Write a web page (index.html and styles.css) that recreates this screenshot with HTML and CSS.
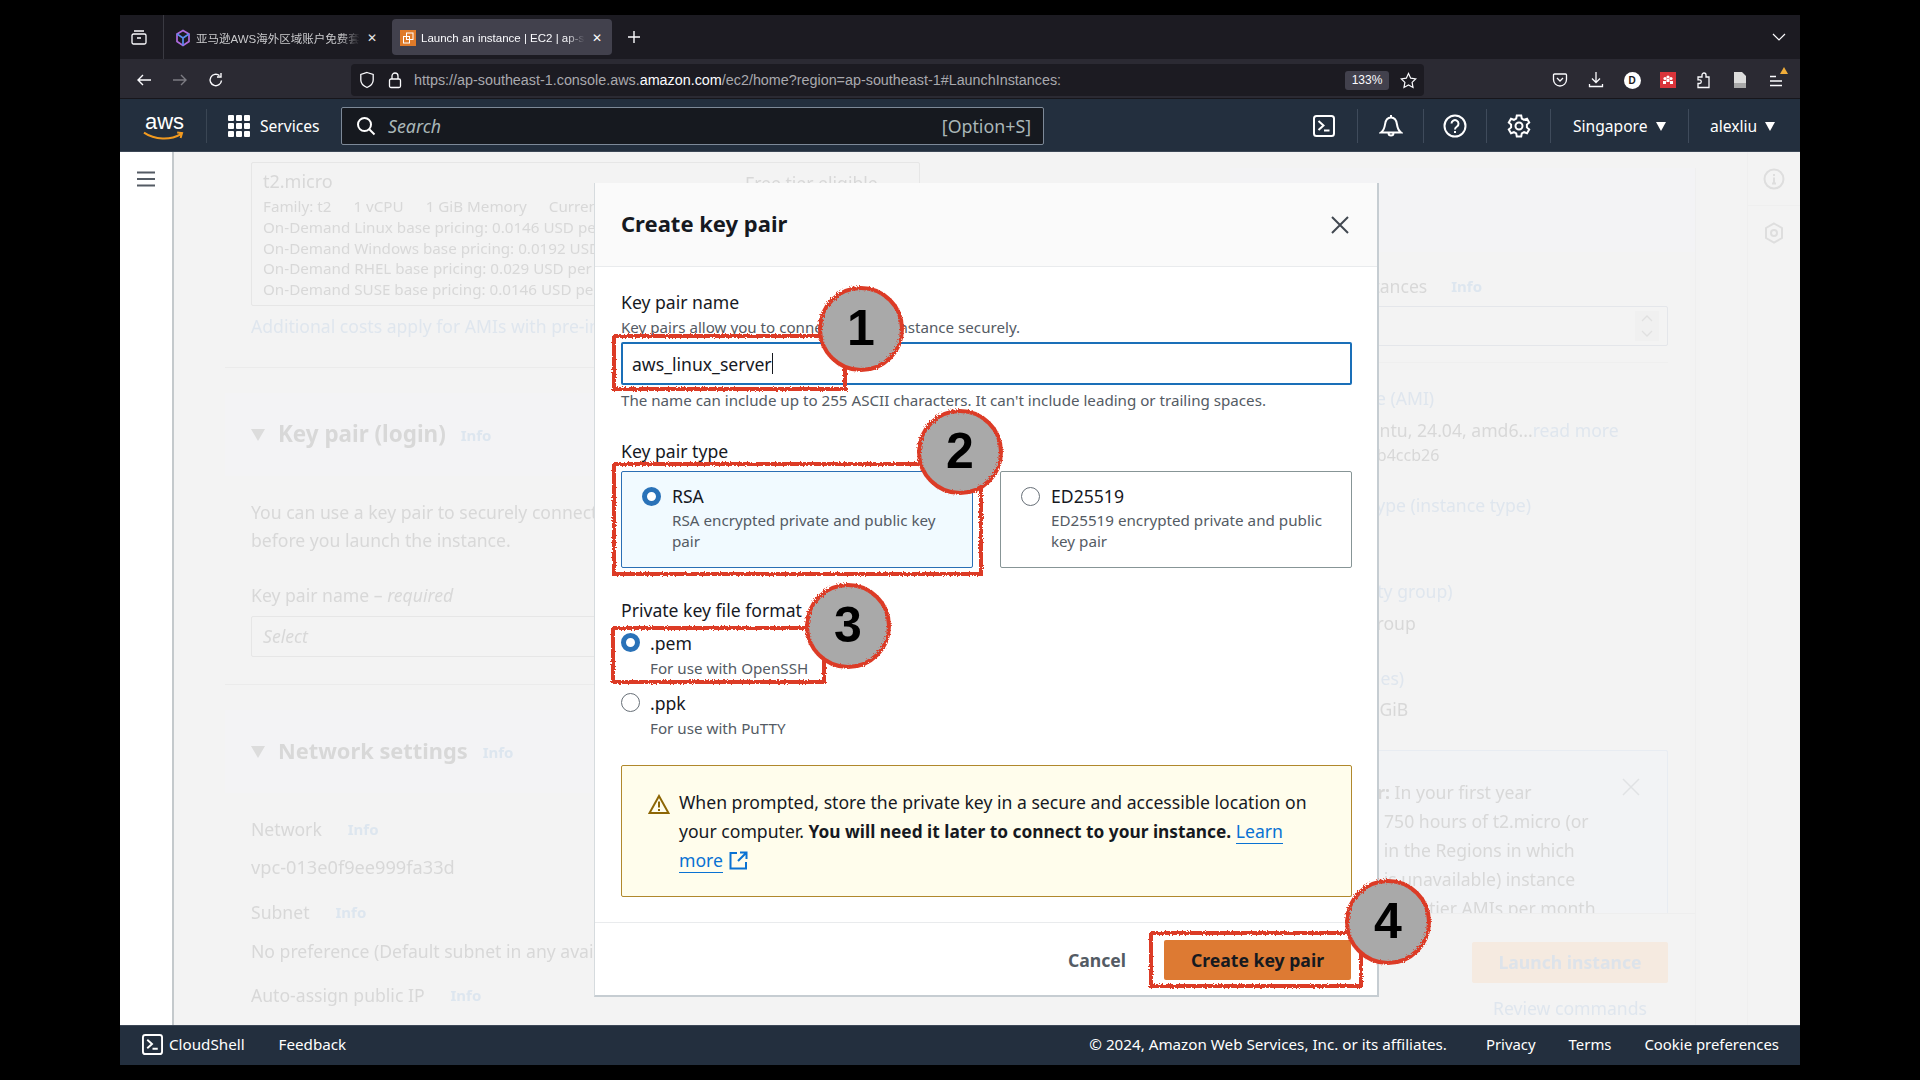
FILE: index.html
```html
<!DOCTYPE html>
<html lang="en">
<head>
<meta charset="utf-8">
<title>Launch an instance | EC2</title>
<link rel="stylesheet" href="styles.css">
</head>
<body>
<svg class="defs" width="0" height="0" aria-hidden="true"><defs><filter id="rough" x="-5%" y="-5%" width="110%" height="110%"><feTurbulence type="fractalNoise" baseFrequency="0.6" numOctaves="2" seed="4"/><feDisplacementMap in="SourceGraphic" scale="3.5"/></filter></defs></svg>
<div class="window">
  <div class="tabs">
    <div class="tabview"><svg width="16" height="16" viewBox="0 0 16 16" fill="none" stroke="#fbfbfe" stroke-width="1.3"><rect x="1" y="5" width="14" height="10" rx="1.5"/><path d="M3 2h10M6 9h4"/></svg></div>
    <div class="tab tab-first">
      <svg width="16" height="18" viewBox="0 0 16 18" fill="none" stroke-width="1.7"><path d="M8 1.5l6 3.5v7.5l-6 4-6-4V5z" stroke="#b06be0"/><path d="M2 5l6 4 6-4M8 9v7.5" stroke="#5a8df0"/></svg>
      <span class="tab-title tab-cjk">亚马逊AWS海外区域账户免费套餐</span>
      <span class="tab-x">✕</span>
    </div>
    <div class="tab tab-on">
      <svg width="16" height="16" viewBox="0 0 16 16"><rect width="16" height="16" fill="#e07b29"/><g fill="none" stroke="#fff" stroke-width="1"><rect x="6.5" y="3" width="6.5" height="6.5"/><rect x="3.5" y="6.5" width="6" height="6.5"/></g></svg>
      <span class="tab-title">Launch an instance | EC2 | ap-southeast-1</span>
      <span class="tab-x">✕</span>
    </div>
    <svg class="plus" width="14" height="14" viewBox="0 0 14 14" stroke="#fbfbfe" stroke-width="1.4"><path d="M7 1v12M1 7h12"/></svg>
    <svg class="chev" width="14" height="8" viewBox="0 0 14 8" fill="none" stroke="#fbfbfe" stroke-width="1.2"><path d="M1 1l6 6 6-6"/></svg>
  </div>

  <div class="toolbar">
    <div class="tool"><svg width="16" height="16" viewBox="0 0 16 16" fill="none" stroke="#fbfbfe" stroke-width="1.4"><path d="M15 8H2M7 3L2 8l5 5"/></svg></div>
    <div class="tool"><svg width="16" height="16" viewBox="0 0 16 16" fill="none" stroke="#7c7b83" stroke-width="1.4"><path d="M1 8h13M9 3l5 5-5 5"/></svg></div>
    <div class="tool"><svg width="16" height="16" viewBox="0 0 16 16" fill="none" stroke="#fbfbfe" stroke-width="1.4"><path d="M13.5 8.5A5.7 5.7 0 1 1 11.5 3.6M13 1v4h-4"/></svg></div>
    <div class="urlbar">
      <svg width="16" height="18" viewBox="0 0 16 18" fill="none" stroke="#fbfbfe" stroke-width="1.3"><path d="M8 1.5l6.2 2v5.5c0 3.6-2.8 6-6.2 7.5-3.4-1.5-6.2-3.9-6.2-7.5V3.5z"/></svg>
      <svg class="lock" width="14" height="18" viewBox="0 0 14 18" fill="none" stroke="#fbfbfe" stroke-width="1.3"><rect x="1.5" y="8" width="11" height="8.5" rx="1.5"/><path d="M4 8V5a3 3 0 0 1 6 0v3"/></svg>
      <span class="url">https://ap-southeast-1.console.aws.<b>amazon.com</b>/ec2/home?region=ap-southeast-1#LaunchInstances:</span>
      <span class="zoombadge">133%</span>
      <svg class="star" width="17" height="17" viewBox="0 0 17 17" fill="none" stroke="#fbfbfe" stroke-width="1.2"><path d="M8.5 1.5l2.2 4.7 5 .7-3.6 3.5.9 5-4.5-2.5-4.5 2.5.9-5L1.3 6.9l5-.7z"/></svg>
    </div>
    <div class="tools-right">
      <div class="tool"><svg width="16" height="16" viewBox="0 0 16 16" fill="none" stroke="#fbfbfe" stroke-width="1.3"><path d="M2.5 2h11a1 1 0 0 1 1 1v4.500a6.500 6.500 0 0 1-13 0V3a1 1 0 0 1 1-1z"/><path d="M5 6l3 3 3-3"/></svg></div>
      <div class="tool"><svg width="16" height="18" viewBox="0 0 16 18" fill="none" stroke="#fbfbfe" stroke-width="1.3"><path d="M8 1v10M4 7.500L8 11.500l4-4M1.500 13v2.500h13V13"/></svg></div>
      <div class="tool"><span class="ext-d">D</span></div>
      <div class="tool"><svg width="16" height="16" viewBox="0 0 16 16"><rect width="16" height="16" fill="#d9343a"/><g fill="#fff"><circle cx="5" cy="6.500" r="1.600"/><circle cx="11" cy="6.500" r="1.600"/><circle cx="8" cy="5" r="1.600"/><path d="M3 12V9h3v3zM6.500 10V7h3v3zM10 12V9h3v3z"/></g></svg></div>
      <div class="tool"><svg width="16" height="18" viewBox="0 0 16 18" fill="none" stroke="#fbfbfe" stroke-width="1.3"><path d="M2 16.500v-4h1.500a1.800 1.800 0 0 0 0-3.600H2V6h4V4a2 2 0 0 1 4 0v2h3v10.500z"/></svg></div>
      <div class="tool"><svg width="14" height="18" viewBox="0 0 14 18"><path d="M1 1h8l4 4v12H1z" fill="#dcdcdc"/><path d="M1 12h12v5H1z" fill="#a8a8a8"/></svg></div>
      <div class="tool tool-menu"><svg width="16" height="14" viewBox="0 0 16 14" stroke="#fbfbfe" stroke-width="1.300"><path d="M2 3.500h6M2 8h12M2 12.500h12"/></svg><i class="menu-alert"></i></div>
    </div>
  </div>

  <header class="awsbar">
    <div class="awslogo"><span class="awsword">aws</span><svg width="41" height="10" viewBox="0 0 42 10" fill="none"><path d="M1 1.500c11 7.500 27 8 38 1.500M35 1.500l5 .5-1.500 5" stroke="#f29a1f" stroke-width="2"/></svg></div>
    <div class="services"><svg width="22" height="22" viewBox="0 0 22 22" fill="#fff"><rect width="6" height="6" rx="1"/><rect x="8" width="6" height="6" rx="1"/><rect x="16" width="6" height="6" rx="1"/><rect y="8" width="6" height="6" rx="1"/><rect x="8" y="8" width="6" height="6" rx="1"/><rect x="16" y="8" width="6" height="6" rx="1"/><rect y="16" width="6" height="6" rx="1"/><rect x="8" y="16" width="6" height="6" rx="1"/><rect x="16" y="16" width="6" height="6" rx="1"/></svg><span>Services</span></div>
    <div class="search"><svg width="20" height="20" viewBox="0 0 20 20" fill="none" stroke="#fff" stroke-width="2"><circle cx="8.500" cy="8.500" r="6.500"/><path d="M13.500 13.500l5 5"/></svg><em>Search</em><span>[Option+S]</span></div>
    <div class="awsright">
      <div class="cell c1"><svg class="term" width="22" height="22" viewBox="0 0 22 22" fill="none" stroke="#fff" stroke-width="2"><rect x="1" y="1" width="20" height="20" rx="2.500"/><path d="M5.500 6l5 4.500-5 4.500M11 15.500h5.500"/></svg></div>
      <div class="cell c2"><svg width="24" height="24" viewBox="0 0 24 24" fill="none" stroke="#fff" stroke-width="2"><path d="M2 18.500h20c-2.500-2-3.500-4.500-4-8C17.500 6.500 15.500 3.500 12 3.500S6.500 6.500 6 10.500c-.5 3.500-1.500 6-4 8zM9.500 19a2.500 2.500 0 0 0 5 0M12 1v2.500"/></svg></div>
      <div class="cell c3"><svg width="24" height="24" viewBox="0 0 24 24" fill="none" stroke="#fff" stroke-width="2"><circle cx="12" cy="12" r="10.500"/><path d="M8.500 9.500a3.500 3.500 0 1 1 5.500 3c-1.500 1-2 1.500-2 3"/><path d="M12 17v2"/></svg></div>
      <div class="cell c4"><svg width="24" height="24" viewBox="0 0 24 24" fill="none" stroke="#fff" stroke-width="2"><circle cx="12" cy="12" r="3.500"/><path d="M9.800 1.500h4.400l.6 3 2.300 1.300 2.900-1 2.200 3.800-2.300 2v2.800l2.300 2-2.200 3.800-2.900-1-2.300 1.300-.6 3H9.800l-.6-3-2.300-1.300-2.900 1-2.200-3.800 2.300-2v-2.800l-2.300-2 2.200-3.800 2.900 1 2.300-1.300z"/></svg></div>
      <div class="cell c5"><span>Singapore</span><i class="caret"></i></div>
      <div class="cell c6"><span>alexliu</span><i class="caret"></i></div>
    </div>
  </header>

  <div class="page">
    <aside class="sidenav"><svg width="18" height="16" viewBox="0 0 18 16" stroke="#545b64" stroke-width="2"><path d="M0 1.500h18M0 8h18M0 14.500h18"/></svg></aside>
    <main class="dimmed">
      <div class="col-left">
        <section class="sec1">
          <div class="typecard">
            <div class="tname">t2.micro</div>
            <div class="tline"><span>Family: t2</span><span>1 vCPU</span><span>1 GiB Memory</span><span>Current generation: true</span></div>
            <div class="tline">On-Demand Linux base pricing: 0.0146 USD per Hour</div>
            <div class="tline">On-Demand Windows base pricing: 0.0192 USD per Hour</div>
            <div class="tline">On-Demand RHEL base pricing: 0.029 USD per Hour</div>
            <div class="tline">On-Demand SUSE base pricing: 0.0146 USD per Hour</div>
            <div class="freetag">Free tier eligible</div>
          </div>
          <div class="addl">Additional costs apply for AMIs with pre-installed software</div>
        </section>
        <section class="sec">
          <div class="sechead"><i class="tri"></i><h2>Key pair (login)</h2><span class="info">Info</span></div>
          <div class="secbody">
            <p class="txt">You can use a key pair to securely connect to your instance. Ensure that you have access to the selected key pair<br>before you launch the instance.</p>
            <div class="kplabel">Key pair name – <em>required</em></div>
            <div class="sel"><em>Select</em></div>
          </div>
        </section>
        <section class="sec sec-last">
          <div class="sechead"><i class="tri"></i><h2>Network settings</h2><span class="info">Info</span></div>
          <div class="secbody">
            <div class="fl fl1"><span>Network</span><span class="info">Info</span></div>
            <div class="fv fv-vpc">vpc-013e0f9ee999fa33d</div>
            <div class="fl fl2"><span>Subnet</span><span class="info">Info</span></div>
            <div class="fv">No preference (Default subnet in any availability zone)</div>
            <div class="fl fl3"><span>Auto-assign public IP</span><span class="info">Info</span></div>
          </div>
        </section>
      </div>
      <div class="col-right">
        <div class="sumhead"><h2>Summary</h2></div>
        <div class="sumbody">
          <div class="fl sum-n"><span>Number of instances</span><span class="info">Info</span></div>
          <div class="numinput"><span class="spin"><svg width="14" height="26" viewBox="0 0 14 26" fill="none" stroke="#e0e0e0" stroke-width="1.300"><path d="M2 8l5-5 5 5M2 18l5 5 5-5"/></svg></span></div>
          <div class="sumrule"></div>
          <div class="lnk s-ami">Software Image (AMI)</div>
          <div class="s-val">Canonical, Ubuntu, 24.04, amd6...<span class="lnktxt">read more</span></div>
          <div class="s-small">ami-003c463c87b4ccb26</div>
          <div class="lnk s-type">Virtual server type (instance type)</div>
          <div class="lnk s-fw">Firewall (security group)</div>
          <div class="s-val s-val2">New security group</div>
          <div class="lnk s-st">Storage (volumes)</div>
          <div class="s-val s-val3">1 volume(s) - 8 GiB</div>
          <div class="freebox">
            <svg class="freex" width="18" height="18" viewBox="0 0 18 18" fill="none" stroke="#e0e2e4" stroke-width="1.500"><path d="M1 1l16 16M17 1L1 17"/></svg>
            <p><b>Free tier:</b> In your first year<br>includes 750 hours of t2.micro (or<br>t3.micro in the Regions in which<br>t2.micro is unavailable) instance<br>usage on free tier AMIs per month</p>
          </div>
        </div>
        <div class="sumfoot">
          <div class="launch">Launch instance</div>
          <div class="review">Review commands</div>
        </div>
      </div>
      <aside class="toolsrail">
        <div class="railcell"><svg width="22" height="22" viewBox="0 0 22 22" fill="none" stroke="#dedede" stroke-width="2"><circle cx="11" cy="11" r="9.500"/><path d="M11 9.500v6M9 15.500h4M11 6v2"/></svg></div>
        <div class="railcell"><svg width="20" height="22" viewBox="0 0 20 22" fill="none" stroke="#dedede" stroke-width="2"><path d="M10 1.500l8 4.500v10l-8 4.500L2 16V6z"/><circle cx="10" cy="11" r="3"/></svg></div>
      </aside>
    </main>
  </div>

  <footer class="foot">
    <div class="foot-left"><svg class="term" width="21" height="21" viewBox="0 0 22 22" fill="none" stroke="#fff" stroke-width="2"><rect x="1" y="1" width="20" height="20" rx="2.500"/><path d="M5.500 6l5 4.500-5 4.500M11 15.500h5.500"/></svg><span>CloudShell</span><span class="fb">Feedback</span></div>
    <div class="foot-right"><span class="copy">© 2024, Amazon Web Services, Inc. or its affiliates.</span><span>Privacy</span><span>Terms</span><span>Cookie preferences</span></div>
  </footer>

  <div class="modal">
    <div class="m-head"><h1>Create key pair</h1><svg width="20" height="20" viewBox="0 0 20 20" fill="none" stroke="#414750" stroke-width="2"><path d="M2 2l16 16M18 2L2 18"/></svg></div>
    <div class="m-body">
      <div class="m-label">Key pair name</div>
      <div class="m-desc m-d1">Key pairs allow you to connect to your instance securely.</div>
      <div class="m-input"><span>aws_linux_server</span><i class="caretline"></i></div>
      <div class="m-desc m-d2">The name can include up to 255 ASCII characters. It can't include leading or trailing spaces.</div>
      <div class="m-label m-l2">Key pair type</div>
      <div class="cards">
        <div class="rcard rcard-on"><i class="radio radio-on"></i><div><div class="opt">RSA</div><div class="optd">RSA encrypted private and public key pair</div></div></div>
        <div class="rcard"><i class="radio"></i><div><div class="opt">ED25519</div><div class="optd">ED25519 encrypted private and public key pair</div></div></div>
      </div>
      <div class="m-label m-l3">Private key file format</div>
      <div class="fmt fmt1"><i class="radio radio-on"></i><div><div class="opt">.pem</div><div class="optd fmtd">For use with OpenSSH</div></div></div>
      <div class="fmt fmt2"><i class="radio"></i><div><div class="opt">.ppk</div><div class="optd fmtd">For use with PuTTY</div></div></div>
      <div class="alert">
        <svg width="22" height="20" viewBox="0 0 22 20" fill="none" stroke="#8d6605" stroke-width="2"><path d="M11 2l9.500 17h-19z"/><path d="M11 7.500v6M11 15v2"/></svg>
        <p>When prompted, store the private key in a secure and accessible location on your computer. <b>You will need it later to connect to your instance.</b> <a>Learn more</a> <svg class="ext" width="19" height="19" viewBox="0 0 19 19" fill="none" stroke="#0972d3" stroke-width="2"><path d="M8 2H1.500v15.500H17V11M11 1.500h6.500V8M17 2L9 10"/></svg></p>
      </div>
    </div>
    <div class="m-foot"><span class="cancel">Cancel</span><span class="primary">Create key pair</span></div>
  </div>

  <div class="redbox rb1"></div>
  <div class="redbox rb2"></div>
  <div class="redbox rb3"></div>
  <div class="redbox rb4"></div>
  <div class="step st1"><span>1</span></div>
  <div class="step st2"><span>2</span></div>
  <div class="step st3"><span>3</span></div>
  <div class="step st4"><span>4</span></div>
</div>
</body>
</html>
```
FILE: styles.css
```css
* { box-sizing: border-box; }
html, body { margin: 0; height: 100%; }
body { background: #000; padding: 15px 120px; font-family: "Noto Sans", "Noto Sans CJK SC", sans-serif; overflow: hidden; }
.defs { position: absolute; }
h1, h2, p { margin: 0; }
.window { position: relative; width: 1680px; height: 1050px; display: flex; flex-direction: column; }

/* browser chrome */
.tabs { height: 44px; background: #1c1b22; display: flex; align-items: center; flex: none; }
.tabview { width: 44px; height: 44px; border-right: 1px solid #3a3a42; display: flex; align-items: center; justify-content: center; padding-right: 5px; }
.tab { width: 210px; height: 36px; margin-left: 8px; display: flex; align-items: center; padding: 2px 9px 0 8px; color: #e8e8ea; font: 11.5px "Liberation Sans", "Noto Sans CJK SC", sans-serif; border-radius: 4px; }
.tab-first { padding-left: 3px; padding-right: 4px; }
.tab svg { flex: none; }
.tab-on { background: #42414d; margin-left: 10px; width: 220px; color: #fbfbfe; }
.tab-title { flex: 1; margin-left: 5px; white-space: nowrap; overflow: hidden; -webkit-mask-image: linear-gradient(90deg, #000 88%, transparent); mask-image: linear-gradient(90deg, #000 88%, transparent); }
.tab-cjk { color: #c9c9cc; }
.tab-x { font-size: 12px; margin-left: 6px; width: 12px; text-align: center; }
.plus { margin-left: 15px; }
.chev { margin-left: auto; margin-right: 14px; }

.toolbar { height: 40px; background: #2b2a33; display: flex; align-items: center; padding: 3px 0 0 6px; flex: none; border-bottom: 1px solid #17161c; }
.tool { width: 36px; height: 36px; display: flex; align-items: center; justify-content: center; position: relative; flex: none; }
.urlbar { width: 1073px; height: 32px; margin-left: 117px; background: #1c1b22; border-radius: 4px; display: flex; align-items: center; padding: 0 7px 0 8px; color: #b8b8bd; }
.lock { margin-left: 13px; }
.url { margin-left: 12px; font: 14.35px "Liberation Sans", sans-serif; white-space: nowrap; color: #a9a9ae; }
.url b { color: #fbfbfe; font-weight: 400; }
.zoombadge { margin-left: auto; width: 44px; height: 19px; background: #42414d; border-radius: 3px; color: #fbfbfe; font: 12px/19px "Liberation Sans", sans-serif; text-align: center; }
.star { margin-left: 11px; }
.tools-right { display: flex; margin-left: 118px; }
.ext-d { width: 17px; height: 17px; border-radius: 50%; background: #fff; color: #1c1b22; font: bold 10px/17px "Liberation Sans", sans-serif; text-align: center; }
.menu-alert { position: absolute; top: 5px; right: 6px; width: 0; height: 0; border-left: 4px solid transparent; border-right: 4px solid transparent; border-bottom: 7px solid #f0ad3a; }

/* AWS header */
.awsbar { height: 53px; background: #232f3e; display: flex; align-items: center; flex: none; color: #fff; font-size: 15.6px; border-bottom: 1px solid #3c4756; padding-top: 2px; }
.awslogo { width: 87px; height: 34px; padding-left: 23px; border-right: 1px solid #3a4654; display: flex; flex-direction: column; align-items: flex-start; justify-content: center; }
.awsword { font: 400 22px/19px "Liberation Sans", sans-serif; margin-left: 2px; }
.services { display: flex; align-items: center; margin-left: 21px; gap: 10px; width: 113px; }
.search { width: 703px; height: 38px; background: #16191f; border: 1px solid #7d8998; border-radius: 2px; display: flex; align-items: center; padding: 0 12px 0 14px; font-size: 17.8px; color: #aab7b8; }
.search em { margin-left: 12px; flex: 1; }
.search span { color: #aab7b8; }
.awsright { margin-left: auto; display: flex; align-items: center; height: 34px; }
.cell { height: 34px; display: flex; align-items: center; justify-content: center; border-left: 1px solid #3f4b5b; }
.c1 { width: 66px; border-left: 0; }
.c2 { width: 66px; }
.c3 { width: 63px; }
.c4 { width: 64px; }
.c5 { width: 138px; justify-content: flex-start; padding-left: 22px; }
.c6 { width: 112px; justify-content: flex-start; padding-left: 21px; }
.caret { width: 0; height: 0; border-left: 5.5px solid transparent; border-right: 5.5px solid transparent; border-top: 9px solid #fff; margin-left: 8px; }

/* dimmed page */
.page { flex: 1; display: flex; min-height: 0; overflow: hidden; }
.sidenav { width: 54px; background: #fff; border-right: 2px solid #c4c9cc; padding: 18px 0 0 17px; flex: none; }
.dimmed { flex: 1; background: #f3f3f3; display: flex; color: #d8d8d8; font-size: 17.6px; filter: blur(.5px); overflow: hidden; }
.col-left { width: 981px; margin-left: 51px; padding-top: 10px; flex: none; }
.sec1 { padding: 0 26px; height: 206px; border-bottom: 1px solid #ebebeb; }
.typecard { position: relative; height: 144px; width: 669px; border: 1px solid #e6e6e6; border-radius: 2px; padding: 5px 11px; font-size: 15.2px; line-height: 20.8px; }
.tname { font-size: 18px; line-height: 27px; margin-bottom: 1px; }
.tline { white-space: nowrap; display: flex; gap: 22px; }
.freetag { position: absolute; top: 10px; left: 493px; font-size: 17.6px; }
.addl { color: #dfe6ee; line-height: 24px; margin-top: 8px; }
.sec { margin-top: 25px; border-bottom: 1px solid #ebebeb; padding-bottom: 27px; }
.sec-last { border: 0; }
.sechead { height: 83px; background: #f3f3f5; display: flex; align-items: center; padding-left: 26px; }
.tri { width: 0; height: 0; border-left: 7px solid transparent; border-right: 7px solid transparent; border-top: 12px solid #dcdcdc; margin-right: 13px; }
.sechead h2 { font-size: 22.4px; font-weight: 700; color: #d8d8d8; margin-bottom: 2px; }
.sec-last .sechead h2 { font-size: 21.8px; }
.info { color: #dde6ef; font-size: 15px; font-weight: 700; margin-left: 15px; }
.secbody { padding: 22px 26px 0; }
.sec-last .secbody { padding-top: 23px; }
.txt { line-height: 28px; white-space: nowrap; }
.kplabel { line-height: 22px; margin-top: 30px; }
.sel { height: 41px; border: 1px solid #e6e6e6; border-radius: 2px; margin-top: 10px; padding: 0 11px; line-height: 39px; width: 930px; }
.fl { display: flex; align-items: center; line-height: 24px; white-space: nowrap; }
.fl .info { margin-left: 26px; }
.fl1 { margin-top: 1px; }
.fv { line-height: 24px; margin-top: 15px; white-space: nowrap; }
.fv-vpc { font-size: 18.2px; margin-top: 14px; }
.fl2 { margin-top: 21px; }
.fl3 { margin-top: 20px; }

.col-right { width: 466px; margin-left: 24px; flex: none; display: flex; flex-direction: column; margin-top: 16px; border-right: 1px solid #efefef; }
.sumhead { height: 84px; background: #f3f3f5; padding-left: 25px; display: flex; align-items: center; }
.sumhead h2 { font-size: 22.4px; font-weight: 700; color: #d8d8d8; }
.sumbody { height: 662px; padding: 22px 27px 0 25px; overflow: hidden; border-bottom: 1px solid #eeeeee; }
.sum-n .info { margin-left: 24px; }
.numinput { height: 40px; margin-top: 8px; border: 1px solid #e4e6ea; border-radius: 2px; display: flex; justify-content: flex-end; padding: 4px 8px 0 0; }
.spin { background: #f0f0f0; width: 24px; height: 30px; display: flex; align-items: center; justify-content: center; }
.sumrule { height: 1px; background: #efefef; margin-top: 16px; }
.lnk, .lnktxt { color: #dfe6ee; }
.lnk { line-height: 24px; white-space: nowrap; }
.s-ami { margin-top: 23px; }
.s-val { line-height: 24px; margin-top: 8px; white-space: nowrap; }
.s-small { font-size: 16px; line-height: 22px; margin-top: 2px; }
.s-type { margin-top: 26.5px; }
.s-fw { margin-top: 62px; }
.s-st { margin-top: 31px; }
.s-val3 { margin-top: 7px; }
.freebox { position: relative; height: 200px; margin-top: 29px; border: 1px solid #e8ecf2; border-radius: 2px; background: #f2f3f5; padding: 27px 0 0 55px; line-height: 29px; }
.freex { position: absolute; right: 27px; top: 27px; }
.freebox p { white-space: nowrap; }
.freebox b { font-weight: 700; }
.sumfoot { display: flex; flex-direction: column; align-items: flex-end; padding-right: 27px; }
.launch { width: 196px; height: 41px; margin-top: 28px; background: #f5eae0; color: #dde3ea; font-weight: 700; text-align: center; line-height: 41px; border-radius: 2px; }
.review { width: 196px; text-align: center; color: #dfe6ee; line-height: 24px; margin-top: 13px; white-space: nowrap; }
.toolsrail { width: 53px; margin-left: 51px; border-left: 1px solid #efefef; flex: none; padding-top: 1px; }
.railcell { height: 53px; display: flex; align-items: center; justify-content: center; border-bottom: 1px solid #efefef; }
.railcell + .railcell { border: 0; }

/* footer */
.foot { height: 40px; background: #232f3e; color: #fff; display: flex; align-items: center; justify-content: space-between; font-size: 15.2px; padding: 0 21px 3px 22px; flex: none; border-top: 1px solid #3c4756; }
.foot-left, .foot-right { display: flex; align-items: center; }
.foot-left .term { margin-right: 6px; }
.fb { margin-left: 34px; }
.foot-right { gap: 33px; font-size: 14.9px; }
.copy { margin-right: 6px; font-size: 15.2px; }

/* modal */
.modal { position: absolute; left: 474px; top: 168px; width: 785px; height: 814px; background: #fff; border-right: 2px solid #c6cdd2; border-left: 1px solid #d6dbde; border-bottom: 2px solid #c6cdd2; color: #16191f; display: flex; flex-direction: column; }
.m-head { height: 84px; background: #fafafa; border-bottom: 1px solid #e9ebed; display: flex; align-items: center; justify-content: space-between; padding: 0 27px 0 26px; flex: none; }
.m-head h1 { font-size: 22px; font-weight: 700; color: #16191f; margin-bottom: 4px; }
.m-body { padding: 23px 25px 0 26px; flex: 1; }
.m-label { font-size: 17.6px; line-height: 24px; }
.m-desc { font-size: 15.15px; line-height: 20px; color: #545b64; white-space: nowrap; }
.m-d1 { margin-top: 3px; }
.m-input { height: 43px; margin-top: 5px; border: 2px solid #1a6fb8; border-radius: 2px; padding: 0 9px; display: flex; align-items: center; font-size: 17.6px; }
.caretline { width: 1px; height: 21px; background: #16191f; }
.m-d2 { margin-top: 5px; }
.m-l2 { margin-top: 29px; }
.cards { display: flex; gap: 27px; margin-top: 8px; }
.rcard { flex: 1; height: 97px; border: 1px solid #879596; border-radius: 2px; display: flex; gap: 11px; padding: 12px 16px 0 20px; }
.rcard .radio { margin-top: 3px; }
.rcard-on { background: #f1faff; border-color: #2a6fb5; }
.radio { width: 19px; height: 19px; border-radius: 50%; border: 1.5px solid #687078; background: #fff; flex: none; margin-top: 2px; }
.radio-on { border: 5px solid #2a72b8; }
.opt { font-size: 17.6px; line-height: 24px; }
.optd { font-size: 15.2px; line-height: 21px; color: #545b64; margin-top: 2px; }
.m-l3 { margin-top: 30px; }
.fmt { display: flex; gap: 10px; }
.fmt .radio { margin-top: 2px; }
.fmt1 { margin-top: 9px; }
.fmt2 { margin-top: 12px; }
.optd.fmtd { margin-top: 3px; }
.alert { height: 132px; margin-top: 26px; background: #fffdec; border: 1px solid #b0882c; border-radius: 2px; display: flex; gap: 9px; padding: 21.5px 32px 0 26px; }
.alert > svg { flex: none; margin-top: 6px; }
.alert p { font-size: 17.6px; line-height: 29px; }
.alert b { font-weight: 700; font-size: 17.3px; }
.alert a { color: #0972d3; border-bottom: 1px solid #0972d3; }
.ext { vertical-align: -3px; margin-left: 1px; }
.m-foot { height: 73px; border-top: 1px solid #e9ebed; display: flex; align-items: flex-start; justify-content: flex-end; padding: 16px 26px 0 0; flex: none; }
.cancel { color: #545b64; font-weight: 700; font-size: 17.6px; line-height: 40px; margin: 1px 38px 0 0; }
.primary { width: 187px; height: 40px; background: #dd7a33; border-radius: 2px; color: #16191f; font-weight: 700; font-size: 17.6px; line-height: 40px; text-align: center; margin-top: 1px; }

/* annotations */
.redbox { position: absolute; border: 4.5px solid #dc3b26; filter: url(#rough); }
.rb1 { left: 492px; top: 319px; width: 235px; height: 57px; }
.rb2 { left: 492px; top: 447px; width: 371px; height: 114px; }
.rb3 { left: 491px; top: 611px; width: 215px; height: 58px; }
.rb4 { left: 1029px; top: 916px; width: 214px; height: 57px; }
.step { position: absolute; width: 86px; height: 86px; color: #000; font: 700 50px/84px "Liberation Sans", sans-serif; text-align: center; isolation: isolate; }
.step::before { content: ""; position: absolute; inset: 0; z-index: -1; border-radius: 50%; background: #a9a9a9; border: 4px solid #dc3b26; filter: url(#rough); }
.st1 { left: 698px; top: 271px; }
.st2 { left: 797px; top: 394px; }
.st3 { left: 685px; top: 568px; }
.st4 { left: 1225px; top: 864px; }
```
